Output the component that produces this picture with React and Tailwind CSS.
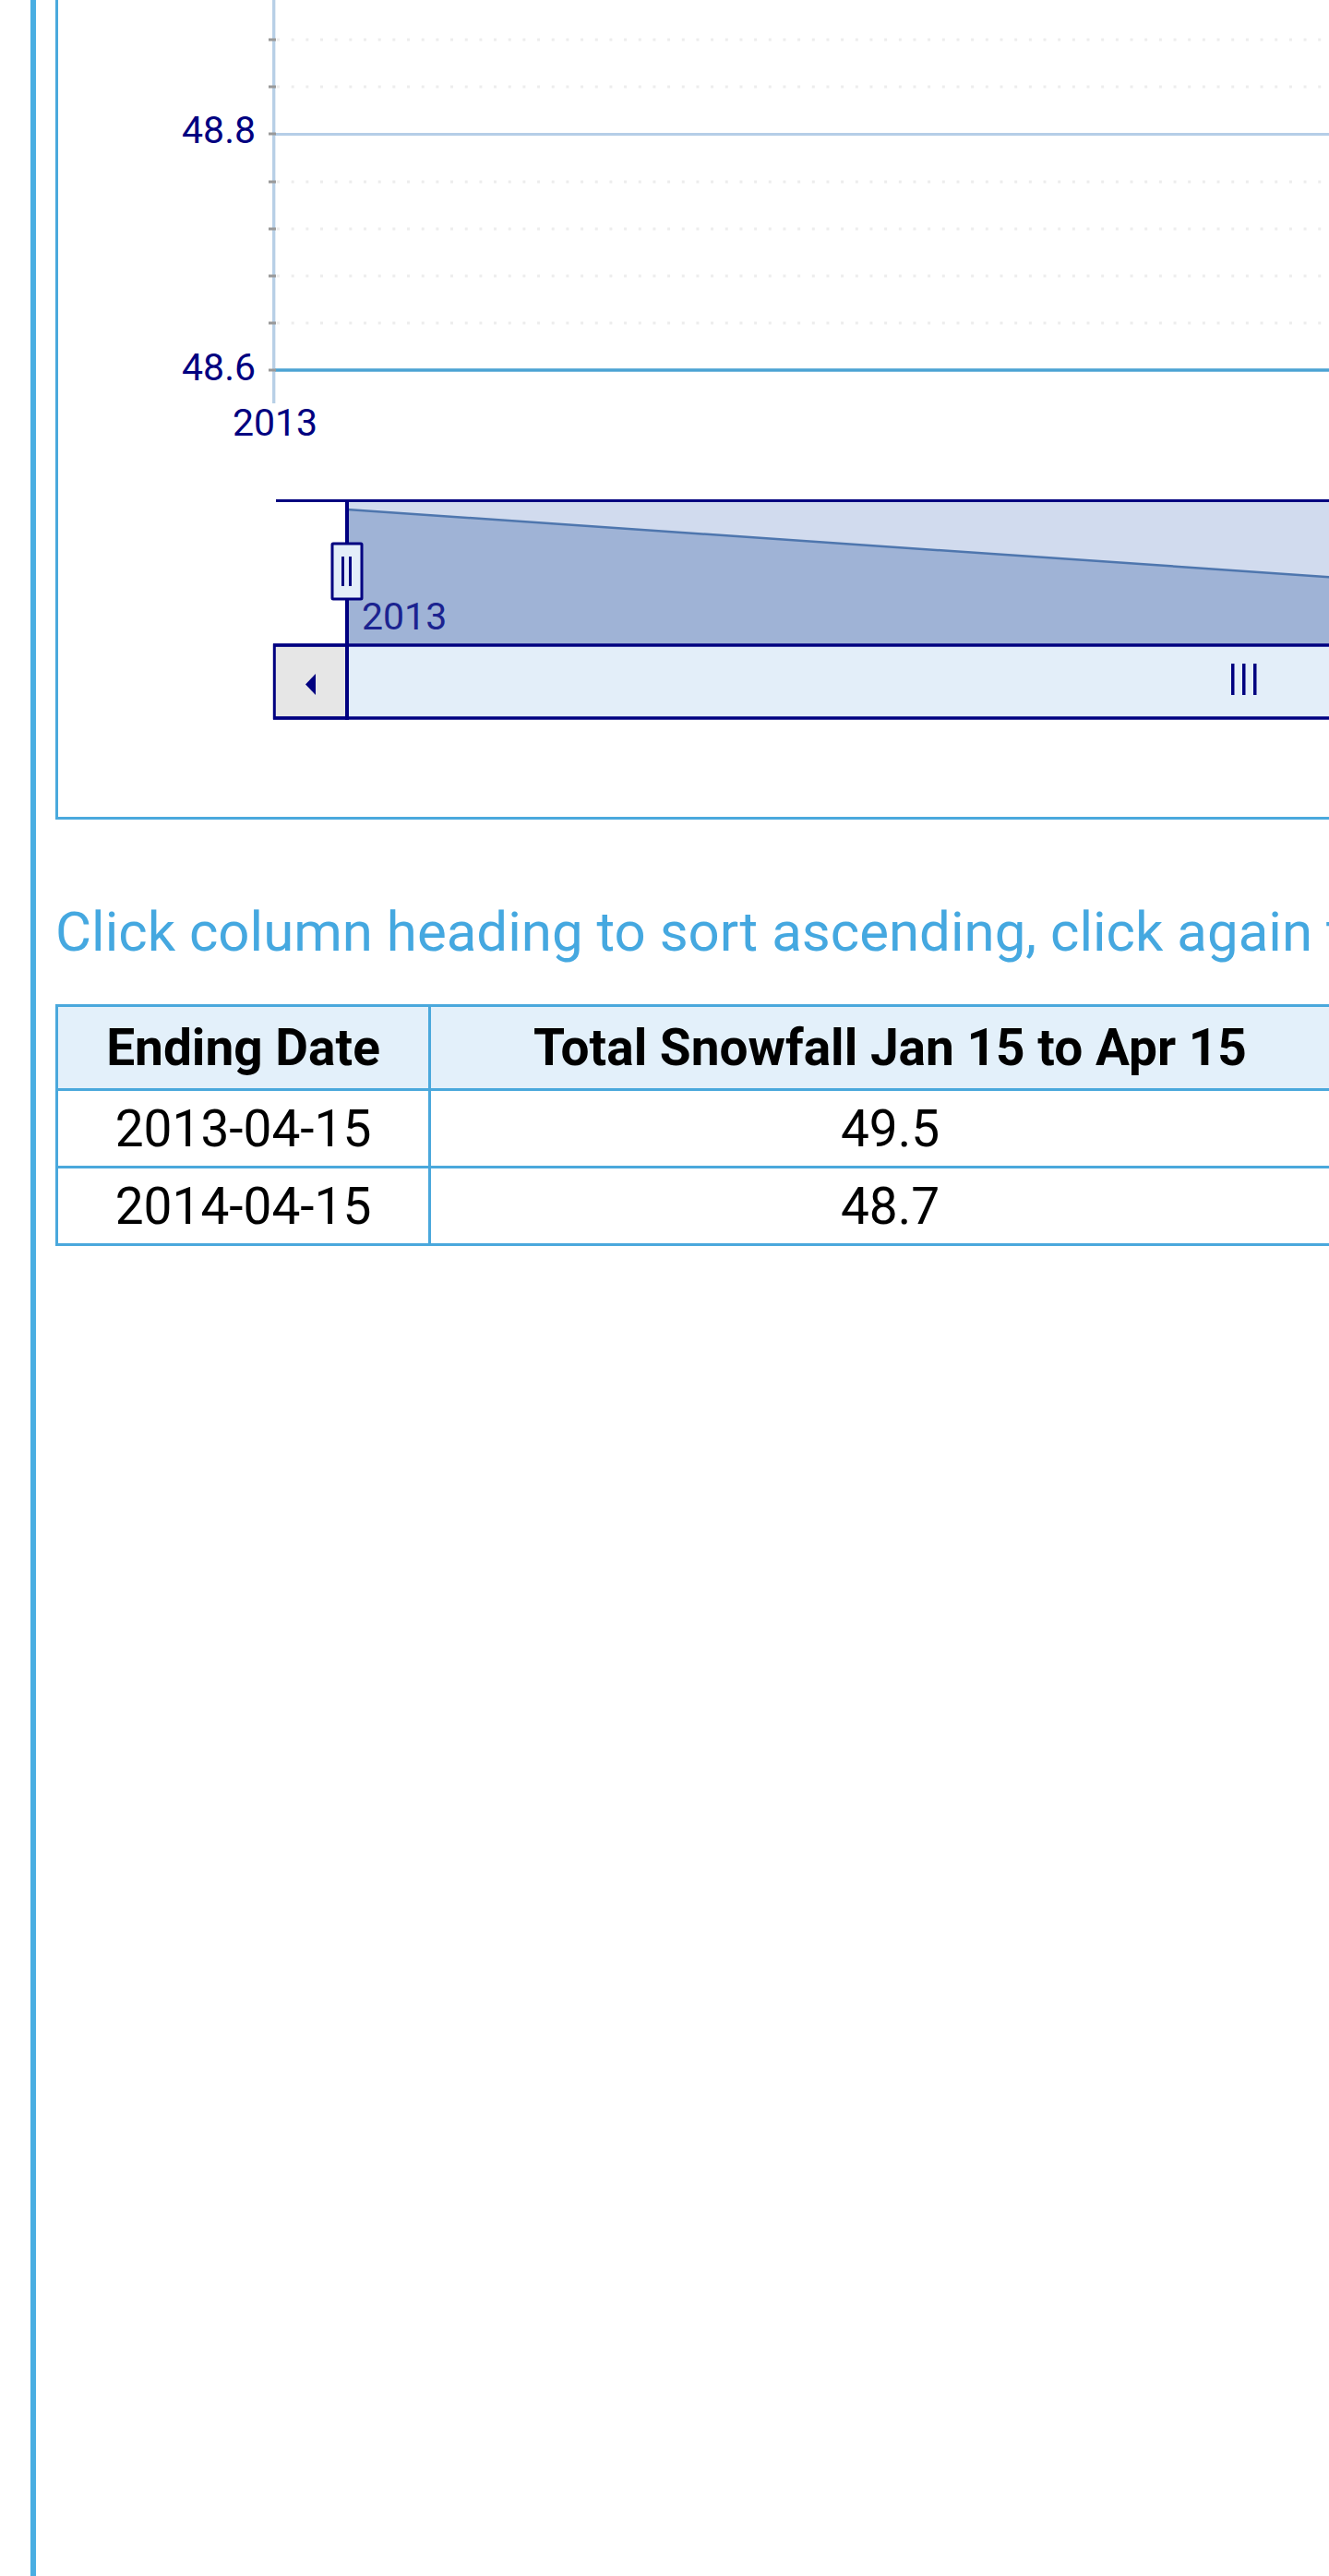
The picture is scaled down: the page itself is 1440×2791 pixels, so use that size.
import React from 'react';

const NAVY = '#000080';

// Highcharts-ish stock chart, only the visible lower part
function SnowChart() {
  const minor = [43, 94, 197, 248, 299, 350];
  const ticks = [43, 94, 145, 197, 248, 299, 350, 401];
  const slope = 0.06875;
  const yEnd = 552 + (2457 - 376) * slope;

  return (
    <svg width="2394" height="885" viewBox="63 0 2394 885" className="block">
      {/* minor grid */}
      {minor.map(y => (
        <line key={y} x1="300" x2="2457" y1={y} y2={y} stroke="#ededed" strokeWidth="3" strokeDasharray="3 12.67" />
      ))}
      <line x1="298" x2="2457" y1="145.5" y2="145.5" stroke="#b5cee7" strokeWidth="3" />
      <line x1="298" x2="2457" y1="401" y2="401" stroke="#4ba3d3" strokeWidth="3.5" />
      <line x1="296.7" x2="296.7" y1="0" y2="437" stroke="#b7cfe6" strokeWidth="3.3" />
      {ticks.map(y => (
        <line key={y} x1="291" x2="299" y1={y} y2={y} stroke="#999999" strokeWidth="3" />
      ))}
      <text x="277" y="155" textAnchor="end" fontSize="41" fill={NAVY} fontFamily="Roboto, sans-serif">48.8</text>
      <text x="277" y="412" textAnchor="end" fontSize="41" fill={NAVY} fontFamily="Roboto, sans-serif">48.6</text>
      <text x="298" y="472" textAnchor="middle" fontSize="41" fill={NAVY} fontFamily="Roboto, sans-serif">2013</text>

      {/* navigator */}
      <rect x="376" y="543" width="2100" height="155" fill="#d1dbee" />
      <polygon points={`376,552 2457,${yEnd} 2457,698 376,698`} fill="#9fb3d6" />
      <line x1="376" y1="552" x2="2457" y2={yEnd} stroke="#4e76ae" strokeWidth="2.5" />
      <line x1="299" x2="2457" y1="542.5" y2="542.5" stroke={NAVY} strokeWidth="3" />
      <text x="392" y="682" fontSize="41" fill="#1b2390" fontFamily="Roboto, sans-serif">2013</text>

      {/* scrollbar */}
      <rect x="376" y="699" width="2100" height="79" fill="#e3eef9" />
      <rect x="297.3" y="699" width="78.7" height="79" fill="#e6e6e6" stroke={NAVY} strokeWidth="3" />
      <polygon points="331,741.5 342,730 342,753" fill={NAVY} />
      <line x1="296" x2="2457" y1="699" y2="699" stroke={NAVY} strokeWidth="3.5" />
      <line x1="296" x2="2457" y1="778" y2="778" stroke={NAVY} strokeWidth="3.5" />
      <rect x="1334" y="719" width="3.5" height="34" fill={NAVY} />
      <rect x="1346" y="719" width="3.5" height="34" fill={NAVY} />
      <rect x="1358" y="719" width="3.5" height="34" fill={NAVY} />

      {/* left handle */}
      <line x1="376" x2="376" y1="541" y2="780" stroke={NAVY} strokeWidth="4" />
      <rect x="360" y="589" width="32" height="60" rx="1" fill="#e3eef9" stroke={NAVY} strokeWidth="3" />
      <rect x="370" y="603" width="3" height="32" fill={NAVY} />
      <rect x="378" y="603" width="3" height="32" fill={NAVY} />
    </svg>
  );
}

const rows = [
  { date: '2013-04-15', total: '49.5' },
  { date: '2014-04-15', total: '48.7' },
];

function App() {
  return (
    <div className="w-[1440px] h-[2791px] overflow-hidden bg-white font-['Roboto',sans-serif]">
      <div className="ml-[33px] h-full border-l-[6px] border-[#4aaee2] pl-[21px]">
        {/* chart box */}
        <div className="w-[2400px] h-[888px] border-x-[3px] border-b-[3px] border-[#4aa9dd]">
          <SnowChart />
        </div>

        <p className="mt-[86px] whitespace-nowrap text-[60px] leading-[72px] text-[#45a8e0]">
          Click column heading to sort ascending, click again to sort descending.
        </p>

        <table className="mt-[42px] w-[1405px] border-collapse text-[55px] text-black">
          <thead>
            <tr className="bg-[#e3f0fa]">
              <th className="w-[404px] h-[91px] border-[3px] border-[#4aa8dc] p-0 font-bold leading-[64px]">Ending Date</th>
              <th className="h-[91px] border-[3px] border-[#4aa8dc] p-0 font-bold leading-[64px]">Total Snowfall Jan 15 to Apr 15</th>
            </tr>
          </thead>
          <tbody>
            {rows.map(r => (
              <tr key={r.date}>
                <td className="h-[84px] border-[3px] border-[#4aa8dc] p-0 text-center leading-[64px]">{r.date}</td>
                <td className="h-[84px] border-[3px] border-[#4aa8dc] p-0 text-center leading-[64px]">{r.total}</td>
              </tr>
            ))}
          </tbody>
        </table>
      </div>
    </div>
  );
}

export default App;
